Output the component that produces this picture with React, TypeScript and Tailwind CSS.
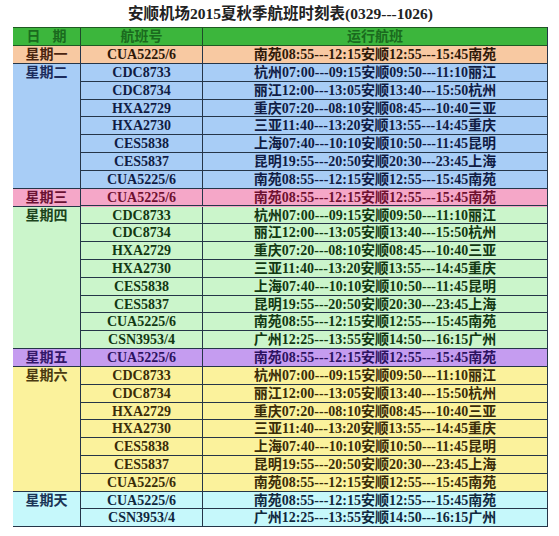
import React from "react";

type Group = {
  day: string;
  bg: string;
  dayColor: string;
  textColor: string;
  rows: [string, string][];
};

const NY = "南苑08:55---12:15安顺12:55---15:45南苑";
const GZ = "广州12:25---13:55安顺14:50---16:15广州";

const week: [string, string][] = [
  ["CDC8733", "杭州07:00---09:15安顺09:50---11:10丽江"],
  ["CDC8734", "丽江12:00---13:05安顺13:40---15:50杭州"],
  ["HXA2729", "重庆07:20---08:10安顺08:45---10:40三亚"],
  ["HXA2730", "三亚11:40---13:20安顺13:55---14:45重庆"],
  ["CES5838", "上海07:40---10:10安顺10:50---11:45昆明"],
  ["CES5837", "昆明19:55---20:50安顺20:30---23:45上海"],
  ["CUA5225/6", NY],
];

const groups: Group[] = [
  { day: "星期一", bg: "bg-[#f8c9a2]", dayColor: "text-[#4a2410]", textColor: "text-[#2e1808]", rows: [["CUA5225/6", NY]] },
  { day: "星期二", bg: "bg-[#a8cdf6]", dayColor: "text-[#1c2c5c]", textColor: "text-[#101c44]", rows: week },
  { day: "星期三", bg: "bg-[#f5a7c8]", dayColor: "text-[#6a1234]", textColor: "text-[#6e1030]", rows: [["CUA5225/6", NY]] },
  { day: "星期四", bg: "bg-[#cbf5cb]", dayColor: "text-[#1c441c]", textColor: "text-[#123812]", rows: [...week, ["CSN3953/4", GZ]] },
  { day: "星期五", bg: "bg-[#c59cf0]", dayColor: "text-[#34186a]", textColor: "text-[#2c1260]", rows: [["CUA5225/6", NY]] },
  { day: "星期六", bg: "bg-[#fbf29c]", dayColor: "text-[#4a3a10]", textColor: "text-[#3a2c08]", rows: week },
  { day: "星期天", bg: "bg-[#c6f8fb]", dayColor: "text-[#1a3456]", textColor: "text-[#10283e]", rows: [["CUA5225/6", NY], ["CSN3953/4", GZ]] },
];

const font = { fontFamily: '"Liberation Serif", "Noto Sans CJK SC", serif' };

export default function App() {
  return (
    <div className="w-[559px] h-[536px] bg-white" style={font}>
      <h1 className="ml-[13px] w-[535px] h-[27px] pt-[5px] text-center text-[15.5px] leading-[18px] font-bold text-[#222]">
        安顺机场2015夏秋季航班时刻表(0329---1026)
      </h1>

      <div className="ml-[13px] w-[535px] border-r border-[#253548]">
        {/* Header */}
        <div className="flex h-[19px] bg-[#3cb63c] border-t border-b border-[#1f5a22] text-[14px] leading-[17px] font-bold text-[#1a6a1e]">
          <div className="w-[67px] flex justify-center gap-[12px]">
            <span>日</span>
            <span>期</span>
          </div>
          <div className="w-[122px] text-center border-l border-[#1f4a2a]">航班号</div>
          <div className="flex-1 text-center border-l border-[#1f4a2a]">运行航班</div>
        </div>

        {groups.map((g) => (
          <div key={g.day} className={`flex ${g.bg}`}>
            <div className={`w-[67px] border-b border-[#253548] text-center text-[14px] leading-[17px] font-bold ${g.dayColor}`}>
              {g.day}
            </div>
            <div className="flex-1 border-l border-[#253548]">
              {g.rows.map(([code, route], i) => (
                <div
                  key={i}
                  className={`flex h-[17.8px] border-b border-[#253548] text-[14px] leading-[17px] font-bold ${g.textColor}`}
                >
                  <div className="w-[121px] text-center">{code}</div>
                  <div className="flex-1 text-center border-l border-[#253548]">{route}</div>
                </div>
              ))}
            </div>
          </div>
        ))}
      </div>
    </div>
  );
}
